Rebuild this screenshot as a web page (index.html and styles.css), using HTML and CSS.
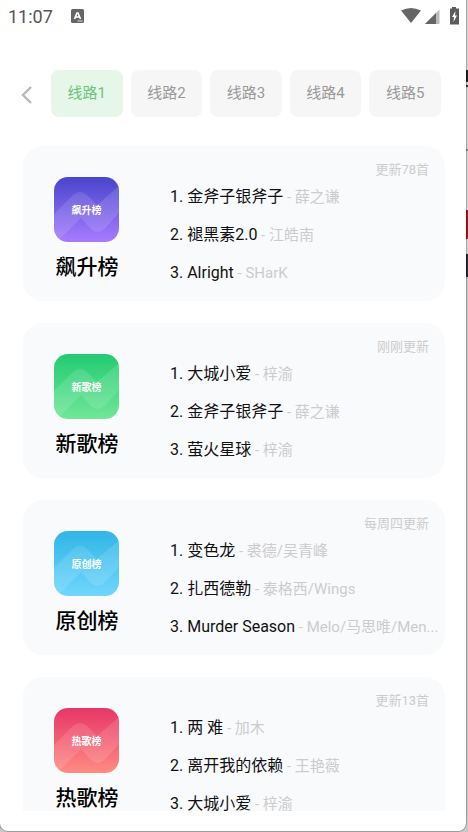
FILE: index.html
```html
<!DOCTYPE html>
<html lang="zh-CN">
<head>
<meta charset="utf-8">
<meta name="viewport" content="width=device-width, initial-scale=1">
<title>排行榜</title>
<link rel="stylesheet" href="styles.css">
</head>
<body>
<div class="desktop">
  <div class="phone">
    <header class="status">
      <time class="clock">11:07</time>
      <svg class="ime" viewBox="0 0 13 14" aria-hidden="true"><rect width="13" height="14" rx="1.5" fill="#666"/><path d="M3.5 10 6 4h1l2.500 6M4.500 8h4" fill="none" stroke="#fff" stroke-width="1.600"/><path d="M6.500 12h5" stroke="#ddd"/></svg>
      <svg class="signals" viewBox="0 0 60 18" aria-hidden="true">
        <path d="M1 3.500Q11 -1.500 21 3.500L11 16Z" fill="#666"/>
        <path d="M25 17 39.500 2.500v14.500Z" fill="#bbb"/>
        <path d="M25 17 36 6v11Z" fill="#666"/>
        <path d="M52 0h4v1.500h3v16h-9v-16h2Z" fill="#5c5c5c"/>
        <path d="M55.500 4 52 10h2l-.5 5 3.500-6.500h-2Z" fill="#fff"/>
      </svg>
    </header>
    <nav class="tabs" aria-label="线路">
      <button class="back" type="button" aria-label="返回"><svg viewBox="0 0 12 18" aria-hidden="true"><path d="M11 1 3 9l8 8" fill="none" stroke="#b8b8b8" stroke-width="2.400"/></svg></button>
      <button class="tab active" type="button">线路1</button>
      <button class="tab" type="button">线路2</button>
      <button class="tab" type="button">线路3</button>
      <button class="tab" type="button">线路4</button>
      <button class="tab" type="button">线路5</button>
    </nav>
    <main class="charts">
      <article class="card">
        <div class="brand">
          <div class="cover rising"><svg viewBox="0 0 65 65" aria-hidden="true"><path class="wave" d="M0 37 18 19Q26 11 34 19L43 28 65 9V36L53 49Q44 60 35 50L27 41 3 65H0Z"/></svg><span>飙升榜</span></div>
          <h2>飙升榜</h2>
        </div>
        <div class="info">
          <p class="note">更新78首</p>
          <ol class="songs">
            <li>1. 金斧子银斧子<span> - 薛之谦</span></li>
            <li>2. 褪黑素2.0<span> - 江皓南</span></li>
            <li>3. Alright<span> - SHarK</span></li>
          </ol>
        </div>
      </article>
      <article class="card">
        <div class="brand">
          <div class="cover fresh"><svg viewBox="0 0 65 65" aria-hidden="true"><path class="wave" d="M0 37 18 19Q26 11 34 19L43 28 65 9V36L53 49Q44 60 35 50L27 41 3 65H0Z"/></svg><span>新歌榜</span></div>
          <h2>新歌榜</h2>
        </div>
        <div class="info">
          <p class="note">刚刚更新</p>
          <ol class="songs">
            <li>1. 大城小爱<span> - 梓渝</span></li>
            <li>2. 金斧子银斧子<span> - 薛之谦</span></li>
            <li>3. 萤火星球<span> - 梓渝</span></li>
          </ol>
        </div>
      </article>
      <article class="card">
        <div class="brand">
          <div class="cover original"><svg viewBox="0 0 65 65" aria-hidden="true"><path class="wave" d="M0 37 18 19Q26 11 34 19L43 28 65 9V36L53 49Q44 60 35 50L27 41 3 65H0Z"/></svg><span>原创榜</span></div>
          <h2>原创榜</h2>
        </div>
        <div class="info">
          <p class="note">每周四更新</p>
          <ol class="songs">
            <li>1. 变色龙<span> - 裘德/吴青峰</span></li>
            <li>2. 扎西德勒<span> - 泰格西/Wings</span></li>
            <li>3. Murder Season<span> - Melo/马思唯/Men...</span></li>
          </ol>
        </div>
      </article>
      <article class="card">
        <div class="brand">
          <div class="cover hot"><svg viewBox="0 0 65 65" aria-hidden="true"><path class="wave" d="M0 37 18 19Q26 11 34 19L43 28 65 9V36L53 49Q44 60 35 50L27 41 3 65H0Z"/></svg><span>热歌榜</span></div>
          <h2>热歌榜</h2>
        </div>
        <div class="info">
          <p class="note">更新13首</p>
          <ol class="songs">
            <li>1. 两 难<span> - 加木</span></li>
            <li>2. 离开我的依赖<span> - 王艳薇</span></li>
            <li>3. 大城小爱<span> - 梓渝</span></li>
          </ol>
        </div>
      </article>
    </main>
  </div>
</div>
</body>
</html>
```
FILE: styles.css
```css
* { box-sizing: border-box; }

body {
  margin: 0;
  font-family: Roboto, "Noto Sans CJK SC", sans-serif;
  color: #111;
}

/* Window behind the phone, visible as a thin edge */
.desktop {
  height: 100vh;
  padding: 0 2px 1px 0;
  background: linear-gradient(#d4d4d4 70px, #222 70px 82px, #d4d4d4 82px 85px, #333 85px 87px, #d4d4d4 87px 149px, #888 149px 151px, #d4d4d4 151px 210px, #a4161a 210px 239px, #d4d4d4 239px 254px, #26262a 254px 277px, #c8c8c8 277px);
}

.phone {
  display: flex;
  flex-direction: column;
  height: 100%;
  padding-bottom: 20px;
  background: #fff;
  border-radius: 0 0 8px 8px;
  box-shadow: 0 0 0 1px rgba(0, 0, 0, 0.22);
}

.status {
  display: flex;
  flex: none;
  align-items: center;
  height: 32px;
  padding: 0 6px 0 8px;
}

.clock {
  font-size: 18px;
  color: #555;
}

.ime {
  width: 13px;
  height: 14px;
  margin-left: 18px;
}

.signals {
  width: 60px;
  height: 18px;
  margin-left: auto;
}

.tabs {
  display: flex;
  flex: none;
  gap: 8px;
  height: 47px;
  margin: 38px 25px 29px 20px;
}

.tabs button {
  border: 0;
  font: inherit;
}

.back {
  flex: none;
  width: 23px;
  padding: 2px 0 0;
  background: none;
  text-align: left;
}

.back svg {
  display: block;
  width: 12px;
  height: 18px;
}

.tabs .tab {
  flex: 1;
  min-width: 0;
  padding: 0 0 4px;
  border-radius: 8px;
  background: #f6f6f6;
  color: #999;
  font-size: 15px;
}

.tabs .active {
  background: #e6f6e9;
  color: #6cc47a;
}

.charts {
  display: flex;
  flex: 1;
  flex-direction: column;
  gap: 22px;
  min-height: 0;
  padding: 0 21px 0 23px;
  overflow: hidden;
}

.card {
  display: flex;
  flex: none;
  gap: 50px;
  padding: 0 4px 9px 31px;
  border-radius: 20px;
  background: #f9fafc;
}

.brand {
  flex: none;
  width: 66px;
  padding-top: 31px;
}

.cover {
  display: grid;
  place-items: center;
  width: 65px;
  height: 65px;
  border-radius: 14px;
  overflow: hidden;
  color: #fff;
  font-size: 10px;
  font-weight: 700;
}

.cover > * { grid-area: 1 / 1; }

.cover svg {
  width: 65px;
  height: 65px;
}

.wave {
  fill: #fff;
  fill-opacity: 0.12;
}

.rising { background: linear-gradient(#4845cc, #a77bff); }
.fresh { background: linear-gradient(#23cb72, #70e797); }
.original { background: linear-gradient(#30b6e6, #70d6fc); }
.hot { background: linear-gradient(#e73668, #ff8b82); }

h2 {
  margin: 10px 0 0;
  color: #000;
  font-size: 21px;
  font-weight: 500;
  line-height: 30px;
  text-align: center;
  white-space: nowrap;
}

.info {
  flex: 1;
  min-width: 0;
}

.note {
  margin: 16px 12px 0 0;
  color: #ccc;
  font-size: 13px;
  line-height: 16px;
  text-align: right;
}

.songs {
  margin: 0;
  padding: 0;
  list-style: none;
  font-size: 16px;
  line-height: 38px;
}

.songs li {
  height: 38px;
  overflow: hidden;
  text-overflow: ellipsis;
  white-space: nowrap;
}

.songs span {
  color: #ccc;
  font-size: 15px;
}
```
